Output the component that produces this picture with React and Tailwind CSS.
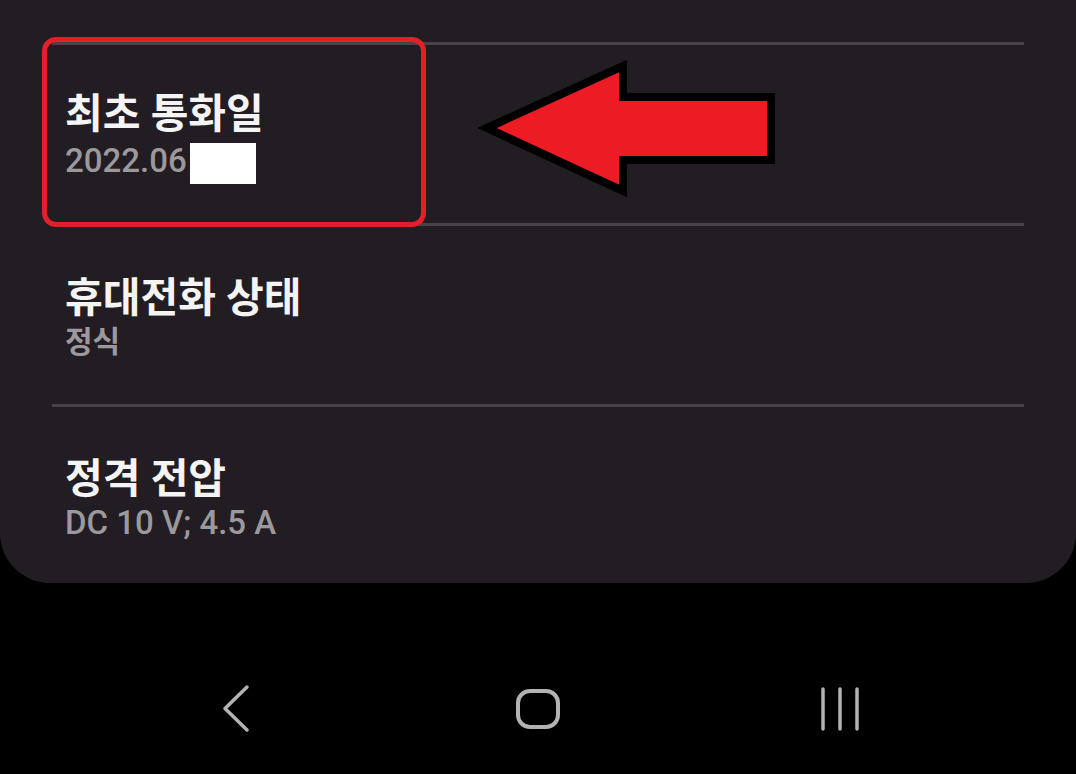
import React from "react";

const KR = { fontFamily: 'Roboto, "Noto Sans CJK KR", sans-serif' };

function Row({ title, sub, subKr, children }) {
  return (
    <div className="h-[178px] flex flex-col justify-center pl-[65px] pt-[5px]">
      <div className="text-[41px] leading-[48px] font-bold text-[#f4f4f4]" style={KR}>
        {title}
      </div>
      <div className="flex items-center mt-[1px]">
        {subKr ? (
          <span className="text-[30px] leading-[38px] font-bold text-[#9c999c]" style={KR}>{sub}</span>
        ) : (
          <span className="text-[33px] leading-[38px] font-medium text-[#9c999c]" style={KR}>{sub}</span>
        )}
        {children}
      </div>
    </div>
  );
}

function Divider() {
  return <div className="h-[3px] mx-[52px] bg-[#48434a]" />;
}

export default function App() {
  return (
    <div className="relative w-[1076px] h-[774px] bg-black overflow-hidden" style={KR}>
      <div className="bg-[#221d22] rounded-b-[50px] h-[583px] pt-[42px]">
        <Divider />
        <Row title="최초 통화일" sub="2022.06">
          <span className="inline-block w-[66px] h-[41px] bg-white ml-[3px] mt-[4px]" />
        </Row>
        <Divider />
        <Row title="휴대전화 상태" sub="정식" subKr />
        <Divider />
        <Row title="정격 전압" sub="DC 10 V; 4.5 A" />
      </div>

      <div className="h-[191px] pt-[60px] flex justify-center items-center">
        <div className="w-[302px] flex justify-center">
          <svg width="32" height="50" viewBox="0 0 32 50">
            <path d="M27 3 L5 24.5 L27 46" fill="none" stroke="#b3b3b3" strokeWidth="3.5" strokeLinecap="round" strokeLinejoin="round" />
          </svg>
        </div>
        <div className="w-[302px] flex justify-center">
          <svg width="48" height="44" viewBox="0 0 48 44">
            <rect x="4" y="4" width="40" height="36" rx="12" fill="none" stroke="#b3b3b3" strokeWidth="4" />
          </svg>
        </div>
        <div className="w-[302px] flex justify-center">
          <svg width="48" height="48" viewBox="0 0 48 48">
            <line x1="7" y1="4" x2="7" y2="44" stroke="#b3b3b3" strokeWidth="3.5" strokeLinecap="round" />
            <line x1="24" y1="4" x2="24" y2="44" stroke="#b3b3b3" strokeWidth="3.5" strokeLinecap="round" />
            <line x1="41" y1="4" x2="41" y2="44" stroke="#b3b3b3" strokeWidth="3.5" strokeLinecap="round" />
          </svg>
        </div>
      </div>

      {/* annotation box */}
      <div className="absolute left-[42px] top-[37px] w-[384px] h-[190px] border-[5px] border-[#e3202a] rounded-[14px]" />

      {/* annotation arrow */}
      <svg className="absolute left-[470px] top-[55px]" width="320" height="150" viewBox="0 0 320 150">
        <polygon
          points="17,73 153,11 153,42 301,42 301,105 153,105 153,136"
          fill="#ed1c24"
          stroke="#000"
          strokeWidth="8"
          strokeLinejoin="miter"
          strokeMiterlimit="10"
        />
      </svg>
    </div>
  );
}
